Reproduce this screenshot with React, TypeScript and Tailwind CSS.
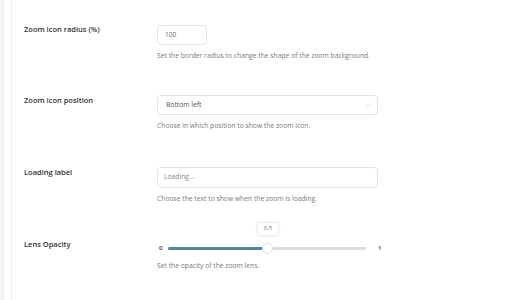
import { ChevronDown } from "lucide-react";

const font = { fontFamily: '"Open Sans", "Liberation Sans", sans-serif' };

function Row({ label, children, help, h }: { label: string; children: React.ReactNode; help: string; h: string }) {
  return (
    <div className={`flex ${h}`}>
      <div className="w-[133px] text-[7.5px] leading-[10px] font-semibold text-[#2c3338]">{label}</div>
      <div className="w-[221px]">
        {children}
        <p className="mt-[6px] whitespace-nowrap text-[6.75px] leading-[10px] text-[#7a7a7a]">{help}</p>
      </div>
    </div>
  );
}

export default function App() {
  return (
    <div className="flex h-[300px] w-[510px] bg-white" style={font}>
      <div className="w-[4px] bg-[#f4f4f4] border-r border-[#ececec]" />
      <div className="w-[8px] bg-white border-r border-[#ececec]" />
      <div className="flex-1 pl-[12px] pt-[24px]">
        <Row h="h-[71px]" label="Zoom icon radius (%)" help="Set the border radius to change the shape of the zoom background.">
          <div className="mt-[1px] flex h-[20px] w-[50px] items-center rounded-[4px] border border-[#e3e3e3] px-[7px] text-[6.5px] text-[#666]">
            100
          </div>
        </Row>
        <Row h="h-[72px]" label="Zoom icon position" help="Choose in which position to show the zoom icon.">
          <div className="flex h-[20px] w-[221px] items-center justify-between rounded-[4px] border border-[#e3e3e3] pl-[8px] pr-[4px] text-[6.75px] text-[#555]">
            <span>Bottom left</span>
            <ChevronDown size={9} strokeWidth={1.5} className="text-[#c9c9c9]" />
          </div>
        </Row>
        <Row h="h-[71px]" label="Loading label" help="Choose the text to show when the zoom is loading.">
          <div className="flex h-[21px] w-[221px] items-center rounded-[4px] border border-[#e3e3e3] px-[6px] text-[6.75px] text-[#888]">
            Loading...
          </div>
        </Row>
        <div className="flex h-[62px]">
          <div className="w-[133px] pt-[1px] text-[7.5px] leading-[10px] font-semibold text-[#2c3338]">Lens Opacity</div>
          <div className="w-[230px] pt-[4px]">
            <div className="flex h-[12px] items-center">
              <span className="w-[11px] pl-[2px] text-[6px] font-semibold text-[#333]">0</span>
              <div className="relative h-[3px] w-[198px] rounded-full bg-[#dcdcdc]">
                <div className="h-[3px] w-[100px] rounded-full bg-[#4a8aa0]" />
                <div className="absolute left-[94px] top-[-4px] h-[11px] w-[11px] rounded-full border border-[#dedede] bg-white" />
                <div className="absolute left-[89px] top-[-25px] flex h-[14px] w-[22px] items-center justify-center rounded-[3px] border border-[#eeeeee] bg-white text-[6px] text-[#4f7f90] shadow-[0_0_3px_rgba(0,0,0,0.06)]">
                  0.5
                </div>
              </div>
              <span className="pl-[12px] text-[6px] font-semibold text-[#333]">1</span>
            </div>
            <p className="mt-[7px] text-[6.75px] leading-[10px] text-[#7a7a7a]">Set the opacity of the zoom lens.</p>
          </div>
        </div>
      </div>
    </div>
  );
}
